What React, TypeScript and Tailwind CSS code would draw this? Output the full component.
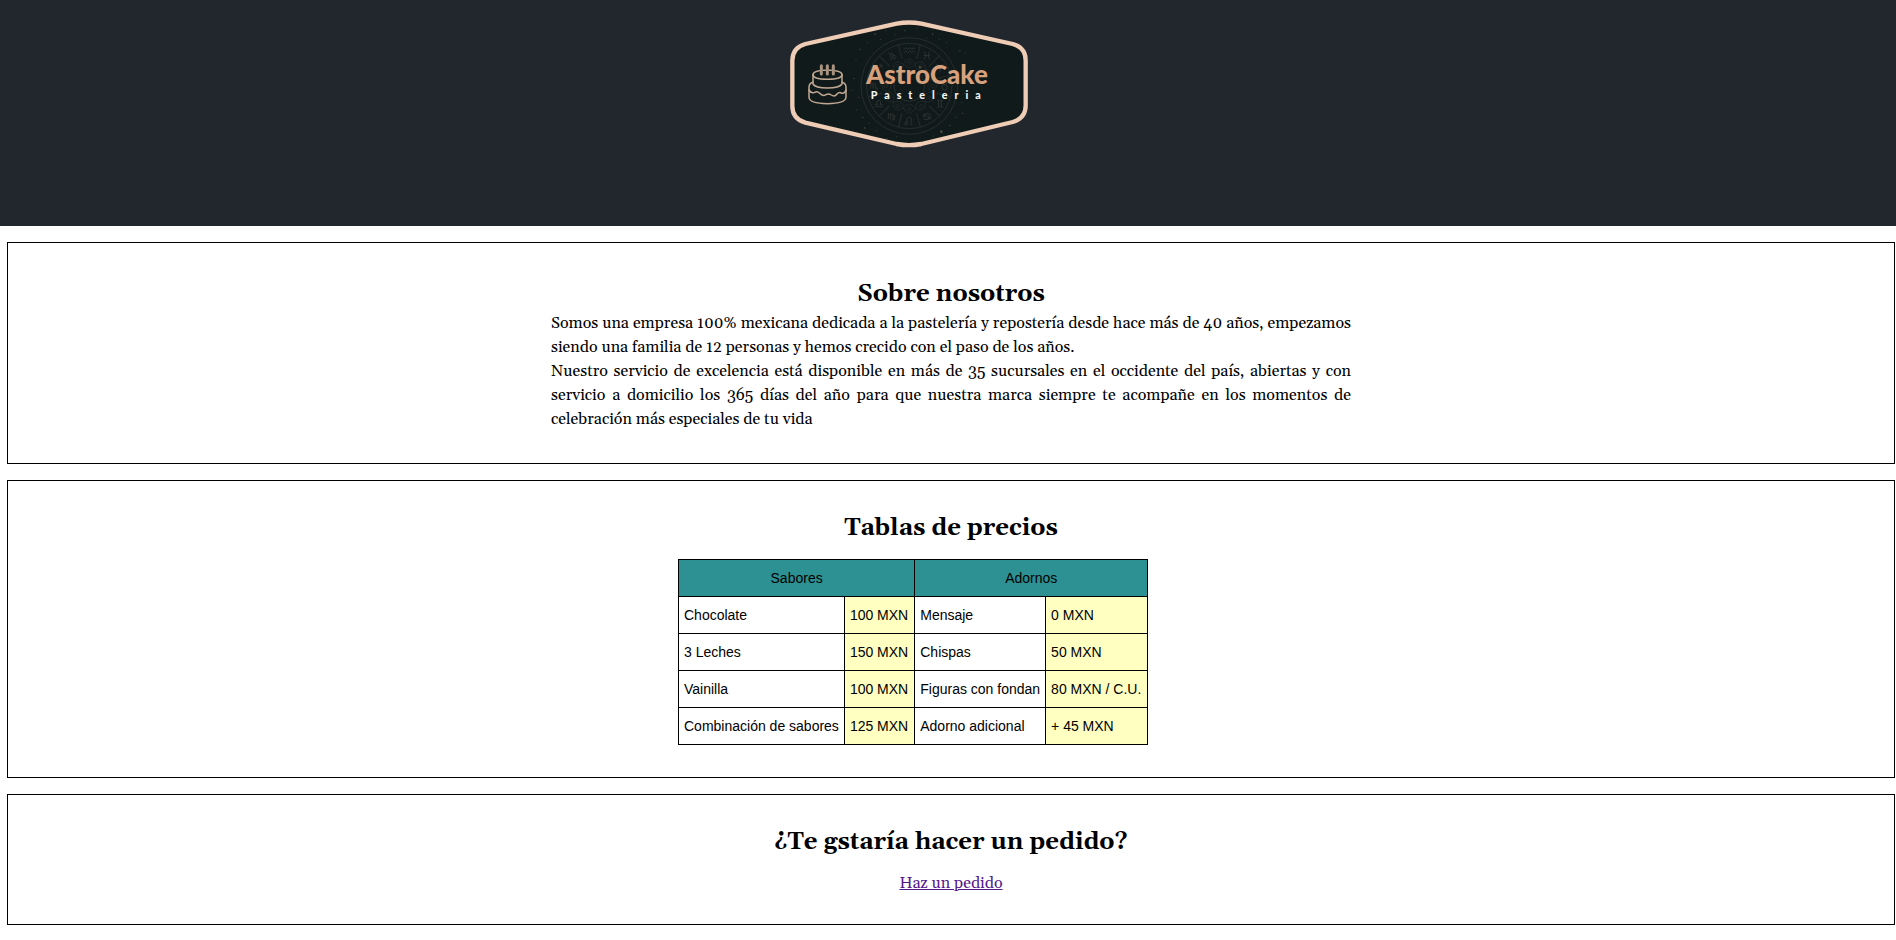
import type { ReactNode } from "react";

// Zodiac signs, clockwise from the top sector, each drawn around its own origin.
const zodiac = [
  "M-17 -4 L-11 -9 L-5 -4 L1 -9 L7 -4 L12 -9 L17 -4 M-17 6 L-11 1 L-5 6 L1 1 L7 6 L12 1 L17 6",
  "M-9 -12 Q1 0 -9 12 M9 -12 Q-1 0 9 12 M-10 0 H10",
  "M0 12 V-4 Q-3 -13 -10 -10 M0 -4 Q3 -13 10 -10",
  "M-9 -12 Q0 4 9 -12 M-8 4 A8 8 0 1 0 8 4 A8 8 0 1 0 -8 4",
  "M-9 -11 Q0 -6 9 -11 M-9 11 Q0 6 9 11 M-4 -8 V8 M4 -8 V8",
  "M-11 -2 Q0 -14 11 -6 M11 2 Q0 14 -11 6 M-11 -3 a4 4 0 1 0 8 0 a4 4 0 1 0 -8 0 M3 3 a4 4 0 1 0 8 0 a4 4 0 1 0 -8 0",
  "M-6 4 a4 4 0 1 1 -1 -1 M-5 3 Q-12 -12 0 -12 Q12 -10 4 4 Q2 12 9 10",
  "M-10 -9 V8 M-10 -6 Q-4 -12 -3 -4 V8 M-3 -5 Q4 -12 4 -4 V6 Q6 12 11 10 M4 -2 Q11 -6 10 2 Q7 8 0 12",
  "M-12 9 H12 M-12 3 H-4 Q-10 -9 0 -10 Q10 -9 4 3 H12",
  "M-10 -9 V8 M-10 -6 Q-4 -12 -3 -4 V8 M-3 -5 Q4 -12 4 -4 V6 Q6 11 12 8 L9 4",
  "M-10 10 L10 -10 M1 -10 H10 V-1 M-7 -1 L2 8",
  "M-10 -9 Q-4 -8 -4 6 M-4 -2 Q2 -14 3 -1 Q4 12 -4 12 M3 4 a5 5 0 1 1 1 4",
];

const prices = [
  ["Chocolate", "100 MXN", "Mensaje", "0 MXN"],
  ["3 Leches", "150 MXN", "Chispas", "50 MXN"],
  ["Vainilla", "100 MXN", "Figuras con fondan", "80 MXN / C.U."],
  ["Combinación de sabores", "125 MXN", "Adorno adicional", "+ 45 MXN"],
];

const stars = [
  [285, 72, 2.5], [318, 62, 1.5], [375, 62, 2], [345, 75, 1.5], [302, 88, 1.5], [240, 118, 2],
  [262, 98, 1.5], [458, 72, 2], [478, 88, 1.5], [500, 98, 1.5], [540, 122, 2], [556, 128, 1.5],
  [228, 150, 1.5], [222, 205, 2], [216, 240, 1.5], [236, 262, 2], [230, 300, 1.5], [248, 322, 2],
  [254, 354, 2.5], [268, 340, 1.5], [290, 362, 1.5], [320, 386, 2], [350, 380, 1.5], [484, 365, 4],
  [460, 378, 1.5], [510, 346, 2], [528, 322, 1.5], [548, 310, 2], [545, 278, 1.5], [554, 250, 1.5],
  [550, 180, 2], [420, 172, 4], [440, 84, 1.5], [410, 55, 1.5],
];

function Logo() {
  return (
    <svg viewBox="0 0 780 435" className="h-[145px] w-[260px]" role="img" aria-label="AstroCake Pasteleria">
      <path
        d="M350 41 Q387 34 424 41 L698 102 Q737 113 737 152 V286 Q737 325 698 336 L424 402 Q387 409 350 402 L76 338 Q37 327 37 288 V152 Q37 113 76 102 Z"
        fill="#111a1b"
        stroke="#efccb5"
        strokeWidth="13"
      />
      <g fill="none" stroke="#272d2c" strokeWidth="3">
        <circle cx="388" cy="228" r="145" />
        <circle cx="388" cy="228" r="128" />
        <circle cx="388" cy="228" r="46" />
        {zodiac.map((sign, i) => (
          <g key={sign} transform={`rotate(${i * 30} 388 228)`}>
            <path d="M421 104 L410 147" />
            <path d="M370 162 Q388 130 406 162 Q388 184 370 162" strokeWidth="2" />
            <circle cx="388" cy="158" r="5" strokeWidth="2" />
          </g>
        ))}
      </g>
      <g fill="none" stroke="#313734" strokeWidth="2.5">
        {zodiac.map((sign, i) => {
          const angle = (i * Math.PI) / 6;
          return (
            <path
              key={sign}
              d={sign}
              transform={`translate(${388 + 106 * Math.sin(angle)} ${228 - 106 * Math.cos(angle)})`}
            />
          );
        })}
      </g>
      <g fill="#4b4a40">
        {stars.map(([x, y, r]) => (
          <circle key={`${x}-${y}`} cx={x} cy={y} r={r} />
        ))}
      </g>
      <g fill="none" stroke="#c0a893" strokeWidth="4.5" strokeLinecap="round" strokeLinejoin="round">
        <path d="M124 167 V192 M142 167 V192 M160 167 V192" stroke="#a8937f" strokeWidth="9" />
        <path d="M118 182 Q99 185 99 194 Q99 207 142 208 Q186 207 186 194 Q186 185 166 182 M130 181 H136 M148 181 H154" />
        <path d="M99 194 V222 Q106 234 142 234 Q178 234 186 222 V194" />
        <path d="M99 217 Q87 220 87 232 V262 Q88 281 142 281 Q197 281 198 262 V232 Q198 220 186 217" />
        <path d="M87 240 Q94 252 104 247 Q112 242 119 250 Q128 260 138 254 Q146 249 154 255 Q164 262 171 252 Q177 245 184 249 Q194 252 198 240" />
      </g>
      <text x="258" y="222" fill="#d6a17c" fontFamily="Lato, sans-serif" fontWeight="900" fontSize="78">
        AstroCake
      </text>
      <text x="272" y="268" fill="#f4f4f2" fontFamily="Lato, sans-serif" fontWeight="900" fontSize="32" className="tracking-[21px]">
        Pasteleria
      </text>
    </svg>
  );
}

function Panel({ title, className, children }: { title: string; className: string; children: ReactNode }) {
  return (
    <section className={`border border-black ${className}`}>
      <h2 className="text-center text-2xl leading-[34px] font-bold">{title}</h2>
      {children}
    </section>
  );
}

export default function App() {
  return (
    <div className="bg-white font-['Georgia','Gelasio','Liberation_Serif',serif] text-base leading-6 text-black">
      <header className="flex h-[226px] items-start justify-center bg-[#22272e] pt-[10px] pr-[76px]">
        <Logo />
      </header>
      <main className="mt-4 mr-px ml-[7px] flex flex-col gap-4 pb-4">
        <Panel title="Sobre nosotros" className="pt-[34px] pb-8">
          <div className="mx-auto max-w-[800px] text-justify">
            <p>
              Somos una empresa 100% mexicana dedicada a la pastelería y repostería desde hace más de 40 años, empezamos
              siendo una familia de 12 personas y hemos crecido con el paso de los años.
            </p>
            <p>
              Nuestro servicio de excelencia está disponible en más de 35 sucursales en el occidente del país, abiertas
              y con servicio a domicilio los 365 días del año para que nuestra marca siempre te acompañe en los momentos
              de celebración más especiales de tu vida
            </p>
          </div>
        </Panel>
        <Panel title="Tablas de precios" className="pt-[30px] pb-8">
          <div className="mx-auto mt-[14px] max-w-[546px]">
            <table className="border-collapse font-['Liberation_Sans',Arial,sans-serif] text-sm">
              <thead>
                <tr className="h-[37px] bg-[#2d9092]">
                  <th colSpan={2} className="border border-black font-normal">Sabores</th>
                  <th colSpan={2} className="border border-black font-normal">Adornos</th>
                </tr>
              </thead>
              <tbody>
                {prices.map(([flavor, flavorPrice, extra, extraPrice]) => (
                  <tr key={flavor} className="h-[37px]">
                    <td className="border border-black px-[5px]">{flavor}</td>
                    <td className="border border-black bg-[#ffffc1] pr-1.5 pl-[5px]">{flavorPrice}</td>
                    <td className="border border-black px-[5px]">{extra}</td>
                    <td className="border border-black bg-[#ffffc1] pr-1.5 pl-[5px]">{extraPrice}</td>
                  </tr>
                ))}
              </tbody>
            </table>
          </div>
        </Panel>
        <Panel title="¿Te gstaría hacer un pedido?" className="pt-[30px] pb-[29px]">
          <p className="mt-3 text-center">
            <a href="#pedido" className="text-[#551a8b] underline">Haz un pedido</a>
          </p>
        </Panel>
      </main>
    </div>
  );
}
